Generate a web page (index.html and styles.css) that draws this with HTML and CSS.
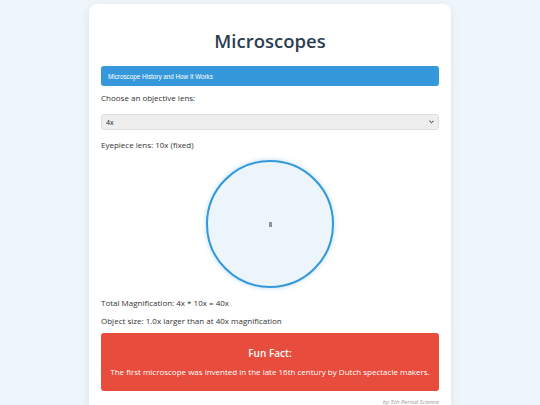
FILE: index.html
```html
<!DOCTYPE html>
<html lang="en">
<head>
    <meta charset="UTF-8">
    <meta name="viewport" content="width=device-width, initial-scale=1.0">
    <title>Microscopes</title>
    <link rel="stylesheet" href="styles.css">
</head>
<body>
    <div class="container">
        <h1>Microscopes</h1>

        <button class="history-btn" type="button">Microscope History and How It Works</button>

        <p>Choose an objective lens:</p>
        <select id="objective" class="lens-select">
            <option value="4" selected>4x</option>
            <option value="10">10x</option>
            <option value="40">40x</option>
            <option value="100">100x</option>
        </select>

        <p>Eyepiece lens: 10x (fixed)</p>

        <!-- Campo de visão do microscópio -->
        <div class="view-wrap">
            <div class="viewfield">
                <div class="specimen"></div>
            </div>
        </div>

        <p>Total Magnification: <span id="mag-calc">4x * 10x = 40x</span></p>
        <p class="last">Object size: <span id="obj-size">1.0x larger than at 40x magnification</span></p>

        <div class="fun-fact">
            <h3>Fun Fact:</h3>
            <p>The first microscope was invented in the late 16th century by Dutch spectacle makers.</p>
        </div>

        <div class="credit">by 5th Period Science</div>
    </div>
</body>
</html>
```

FILE: styles.css
```css
body {
    background-color: #eef6fc; /* Fundo azul claro */
    color: #333333;
    font-family: "Open Sans", Arial, sans-serif;
    margin: 0;
    padding: 4px 0 0;
}

.container {
    width: 338px;
    margin: 0 auto;
    background-color: #ffffff;
    padding: 12px 12px 4px;
    border-radius: 8px;
    box-shadow: 0 2px 10px rgba(0, 0, 0, 0.08);
}

h1 {
    font-size: 18.5px;
    font-weight: 600;
    color: #2c3e50;
    text-align: center;
    margin: 14px 0 14px;
    line-height: 22px;
}

p {
    font-size: 8px;
    margin: 0 0 8px;
    line-height: 10px;
}

p.last {
    margin-bottom: 7px;
}

.history-btn {
    display: block;
    width: 100%;
    height: 20px;
    padding: 0 7px;
    border: none;
    border-radius: 3px;
    background-color: #3498db;
    color: #ffffff;
    font-family: "Liberation Sans", Arial, sans-serif;
    font-size: 6.3px;
    text-align: left;
    margin-bottom: 7px;
}

.lens-select {
    display: block;
    width: 100%;
    height: 16px;
    margin: 11px 0 10px;
    font-family: "Open Sans", Arial, sans-serif;
    font-size: 7px;
    color: #222222;
    background-color: #eeeeee;
    border: 1px solid #dddddd;
    border-radius: 3px;
    padding: 0 4px;
    appearance: none;
    -webkit-appearance: none;
    /* Seta pequena do select */
    background-image: url("data:image/svg+xml,%3Csvg xmlns='http://www.w3.org/2000/svg' width='6' height='4' viewBox='0 0 6 4'%3E%3Cpath d='M0.5 0.5 L3 3 L5.5 0.5' fill='none' stroke='%23222' stroke-width='1.2'/%3E%3C/svg%3E");
    background-repeat: no-repeat;
    background-position: right 4px center;
    background-size: 5px 4px;
}

.view-wrap {
    display: flex;
    justify-content: center;
    margin: 10px 0 10px;
}

.viewfield {
    width: 124px;
    height: 124px;
    border: 2px solid #3498db;
    border-radius: 50%;
    background-color: #ebf5fb;
    box-shadow: 0 0 5px rgba(52, 152, 219, 0.35);
    display: flex;
    align-items: center;
    justify-content: center;
}

.specimen {
    width: 3px;
    height: 5px;
    background-color: #8f9498;
}

.fun-fact {
    background-color: #e74c3c;
    color: #ffffff;
    border-radius: 3px;
    padding: 12px 8px 14px;
    text-align: center;
}

.fun-fact h3 {
    font-size: 10px;
    font-weight: 600;
    line-height: 12px;
    margin: 2px 0 8px;
}

.fun-fact p {
    font-size: 8px;
    margin: 0;
}

.credit {
    text-align: right;
    font-size: 6px;
    font-style: italic;
    color: #999999;
    padding: 7px 0 4px;
}
```
